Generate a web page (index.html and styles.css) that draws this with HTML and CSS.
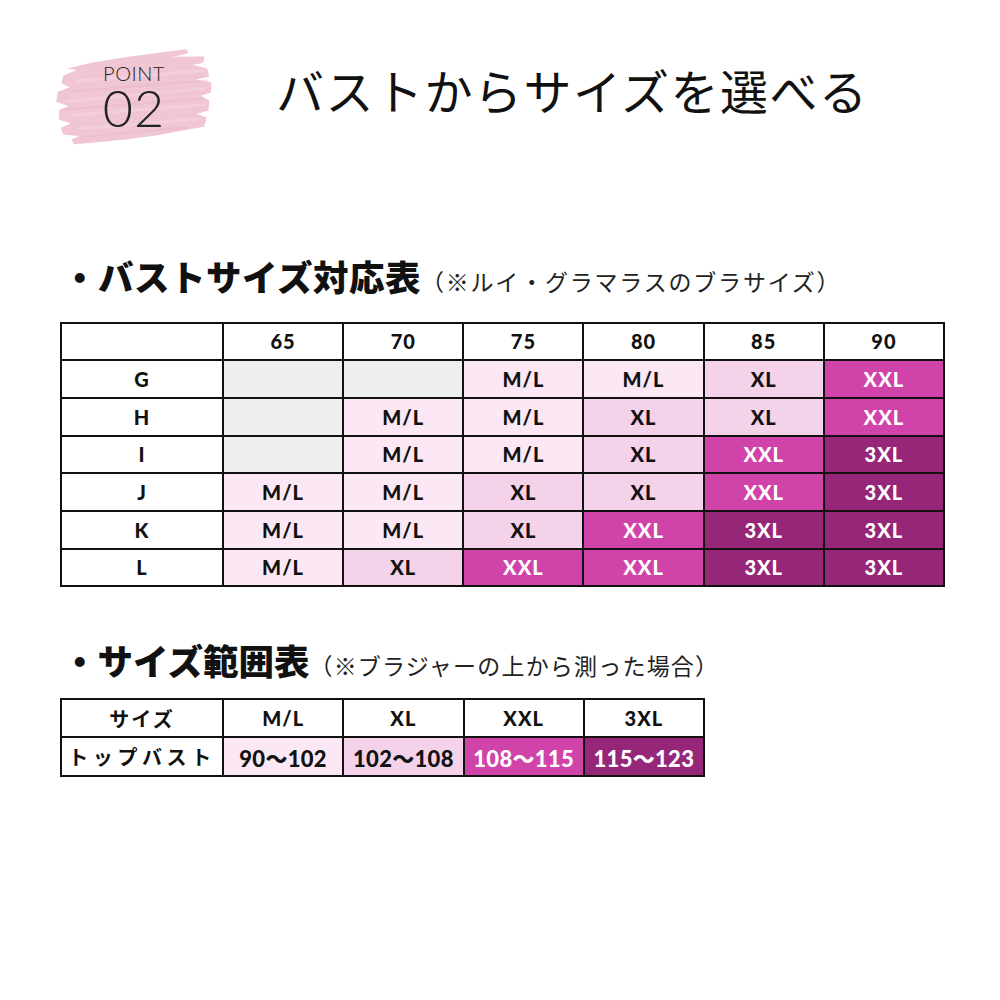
FILE: index.html
```html
<!DOCTYPE html>
<html lang="ja">
<head>
<meta charset="utf-8">
<link rel="stylesheet" href="styles.css">
</head>
<body>
<div class="page">
  <header class="hero">
    <div class="badge">
      <svg class="brush" viewBox="0 0 160 95" width="160" height="95">
        <path d="M38 12 L70 8 L110 4 L132 2 L134 6 L118 9 L150 10 L148 16 L138 18 L152 22 L154 30 L140 33 L156 36 L155 46 L145 49 L153 54 L152 64 L140 67 L150 71 L147 80 L120 84 L100 87 L70 90 L40 92 L16 93 L14 88 L22 85 L6 83 L4 76 L14 72 L2 68 L3 58 L12 55 L0 50 L2 40 L14 36 L6 32 L8 24 L22 19 L12 17 Z" fill="#f0c6d2"/>
        <path d="M20 30 L150 24 M10 50 L148 42 M14 64 L150 58 M20 78 L144 72" stroke="#f4d3dc" stroke-width="3" fill="none" opacity="0.7"/>
        <path d="M16 40 L152 34 M8 58 L146 52 M24 86 L130 80" stroke="#eab8c7" stroke-width="2" fill="none" opacity="0.5"/>
      </svg>
      <div class="badge-text">
        <span class="point">POINT</span>
        <span class="num">02</span>
      </div>
    </div>
    <h1 class="title">バストからサイズを選べる</h1>
  </header>

  <section class="sec sec1">
    <h2 class="heading"><span class="h-main">・バストサイズ対応表</span><span class="h-note">（※ルイ・グラマラスのブラサイズ）</span></h2>
    <table class="grid big">
      <colgroup><col class="c0"><col><col><col><col><col><col></colgroup>
      <tr><th></th><th>65</th><th>70</th><th>75</th><th>80</th><th>85</th><th>90</th></tr>
      <tr><th>G</th><td class="na"></td><td class="na"></td><td class="ml">M/L</td><td class="ml">M/L</td><td class="xl">XL</td><td class="xxl">XXL</td></tr>
      <tr><th>H</th><td class="na"></td><td class="ml">M/L</td><td class="ml">M/L</td><td class="xl">XL</td><td class="xl">XL</td><td class="xxl">XXL</td></tr>
      <tr><th>I</th><td class="na"></td><td class="ml">M/L</td><td class="ml">M/L</td><td class="xl">XL</td><td class="xxl">XXL</td><td class="x3">3XL</td></tr>
      <tr><th>J</th><td class="ml">M/L</td><td class="ml">M/L</td><td class="xl">XL</td><td class="xl">XL</td><td class="xxl">XXL</td><td class="x3">3XL</td></tr>
      <tr><th>K</th><td class="ml">M/L</td><td class="ml">M/L</td><td class="xl">XL</td><td class="xxl">XXL</td><td class="x3">3XL</td><td class="x3">3XL</td></tr>
      <tr><th>L</th><td class="ml">M/L</td><td class="xl">XL</td><td class="xxl">XXL</td><td class="xxl">XXL</td><td class="x3">3XL</td><td class="x3">3XL</td></tr>
    </table>
  </section>

  <section class="sec sec2">
    <h2 class="heading"><span class="h-main">・サイズ範囲表</span><span class="h-note">（※ブラジャーの上から測った場合）</span></h2>
    <table class="grid small">
      <colgroup><col class="c0"><col><col><col><col></colgroup>
      <tr><th class="jp">サイズ</th><th>M/L</th><th>XL</th><th>XXL</th><th>3XL</th></tr>
      <tr class="vals"><th class="jp wide">トップバスト</th><td class="ml">90〜102</td><td class="xl">102〜108</td><td class="xxl">108〜115</td><td class="x3">115〜123</td></tr>
    </table>
  </section>
</div>
</body>
</html>
```
FILE: styles.css
```css
html, body {
  margin: 0;
  padding: 0;
  background: #ffffff;
}
body {
  font-family: "Noto Sans CJK JP", "Noto Sans", sans-serif;
  color: #111111;
}
.page {
  width: 1000px;
  height: 1000px;
  padding: 0 0 0 60px;
  box-sizing: border-box;
}
.hero {
  display: flex;
  align-items: center;
  height: 100px;
  margin-top: 46px;
}
.badge {
  position: relative;
  width: 160px;
  height: 95px;
  margin-left: -4px;
  flex: none;
}
.brush {
  position: absolute;
  left: 0;
  top: 0;
  transform: rotate(-2deg);
}
.badge-text {
  position: relative;
  display: flex;
  flex-direction: column;
  align-items: center;
  width: 120px;
  padding-left: 18px;
  padding-top: 15px;
  font-family: "Lato", sans-serif;
  font-weight: 300;
  color: #222;
  line-height: 1;
}
.point {
  font-size: 20px;
  line-height: 18px;
  letter-spacing: 0.5px;
}
.num {
  font-size: 52px;
  line-height: 44px;
  margin-top: 3px;
  letter-spacing: 1px;
}
.title {
  margin: 0 0 15px 60px;
  font-size: 48px;
  font-weight: 400;
  letter-spacing: 1.5px;
  line-height: 1;
  color: #111;
}
.heading {
  margin: 0;
  display: flex;
  align-items: baseline;
  line-height: 1;
  padding-left: 2px;
}
.h-main {
  font-size: 35.5px;
  font-weight: 900;
  color: #111;
}
.h-note {
  font-size: 23px;
  font-weight: 400;
  letter-spacing: 1.2px;
  color: #222;
}
.sec1 .h-main {
  letter-spacing: 0.5px;
}
.sec1 .h-note {
  letter-spacing: 1.8px;
}
.sec1 {
  margin-top: 112px;
}
.sec1 .heading {
  margin-bottom: 28px;
}
.sec2 {
  margin-top: 55px;
}
.sec2 .heading {
  margin-bottom: 20px;
}
.grid {
  border-collapse: collapse;
  table-layout: fixed;
  font-family: "Lato", "Noto Sans CJK JP", sans-serif;
  font-weight: 900;
  color: #111;
}
.grid.big {
  width: 885px;
}
.grid.small {
  width: 645px;
}
.grid col.c0 {
  width: 162px;
}
.grid th, .grid td {
  border: 2px solid #111;
  padding: 0;
  text-align: center;
  vertical-align: middle;
  font-size: 20px;
  letter-spacing: 1px;
}
.grid.big tr {
  height: 37.7px;
}
.grid.small tr {
  height: 38.5px;
}
.grid th {
  font-weight: 900;
}
.grid th.jp {
  font-family: "Noto Sans CJK JP", sans-serif;
  font-weight: 700;
  font-size: 20px;
  letter-spacing: 2px;
}
.grid th.jp.wide {
  letter-spacing: 4.6px;
}
.grid .vals td {
  font-size: 22px;
  letter-spacing: 0.3px;
}
.na { background: #efefef; }
.ml { background: #fbe8f4; }
.xl { background: #f4d2ea; }
.xxl { background: #d043a8; color: #ffffff; }
.x3 { background: #962678; color: #ffffff; }
```
